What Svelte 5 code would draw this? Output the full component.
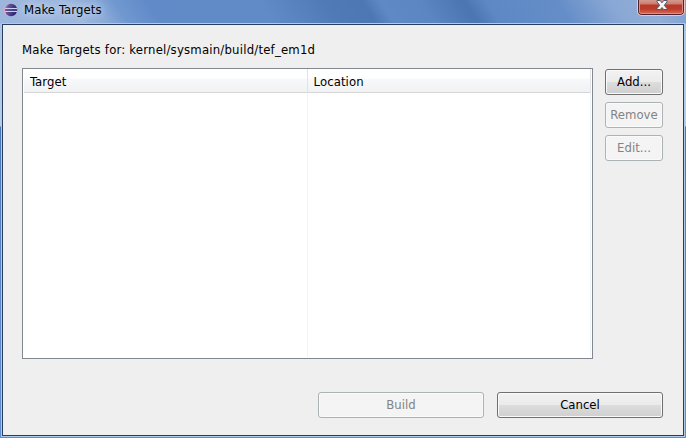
<script>
  const columns = ['Target', 'Location'];
  const actions = [
    { label: 'Add...', enabled: true },
    { label: 'Remove', enabled: false },
    { label: 'Edit...', enabled: false }
  ];
</script>

<div class="window">
  <header>
    <svg class="logo" width="16" height="14" viewBox="0 0 16 14">
      <defs>
        <linearGradient id="orb" x1="0" y1="0" x2="1" y2="0.3">
          <stop offset="0" stop-color="#b59bc5" />
          <stop offset="0.35" stop-color="#64549c" />
          <stop offset="1" stop-color="#28246c" />
        </linearGradient>
      </defs>
      <circle cx="6.2" cy="7" r="6" fill="#dba6c1" />
      <circle cx="8" cy="7" r="6.2" fill="url(#orb)" />
      <path d="M2 5.500H14M2 8.500H14" stroke="#c9d0ee" stroke-width="1" />
      <path d="M2 7H14" stroke="#51539a" stroke-width="1" />
    </svg>
    <span class="title">Make Targets</span>
    <button class="close" aria-label="Close">
      <svg width="12" height="11" viewBox="0 0 12 11">
        <path d="M1 .5H4.300L6 2.800 7.700 .5H11V1.800L8.300 5.300 11 8.500V9.500H7.700L6 7.500 4.300 9.500H1V8.500L3.700 5.300 1 1.800Z" fill="#f6f6f6" stroke="#535866" />
      </svg>
    </button>
  </header>
  <main>
    <p>Make Targets for: kernel/sysmain/build/tef_em1d</p>
    <div class="body">
      <div class="table">
        {#each columns as column}
          <div class="column"><div class="head">{column}</div></div>
        {/each}
      </div>
      <div class="actions">
        {#each actions as action}
          <button class="btn" disabled={!action.enabled}>{action.label}</button>
        {/each}
      </div>
    </div>
    <footer>
      <button class="btn" disabled>Build</button>
      <button class="btn">Cancel</button>
    </footer>
  </main>
</div>

<style>
  :global(body) {
    margin: 0;
    overflow: hidden;
  }
  .window {
    box-sizing: border-box;
    width: 686px;
    height: 438px;
    padding: 0 1px 1px;
    display: flex;
    flex-direction: column;
    font: 13px 'DejaVu Sans Condensed', 'DejaVu Sans', sans-serif;
    font-stretch: condensed;
    color: #000;
    background:
      linear-gradient(57deg, #9db6dd 0, #9bb5dd 70px, #88a8d7 92px, #7098d0 108px, #618bc8 135px, #608bc7 230px, #4f7ab6 285px, #4c77b2 316px, #5f89c5 331px, #5b86c1 365px, #4c77b2 396px, #4b76b1 402px, #5d88c4 420px, #658ec8 480px, #8aa8d5 525px, #91add8 555px, #7e9fcf 588px) 0 0 / 686px 24px no-repeat,
      linear-gradient(#a9c1e3 0, #b8cdea 126px, #4777b7 127px, #5d8ac7 300px, #608dcc 100%);
  }
  header {
    height: 23px;
    flex: none;
    display: flex;
    align-items: flex-start;
  }
  .logo {
    margin: 3px 0 0 2px;
  }
  .title {
    margin-left: 5px;
    line-height: 19px;
    text-shadow: 0 0 7px #dce6f5, 0 0 12px #cedcf0;
    letter-spacing: 0.09px;
  }
  .close {
    box-sizing: border-box;
    width: 48px;
    height: 16px;
    margin: 0 0 0 auto;
    padding: 0;
    border: 1px solid #e8c6cc;
    border-top: 0;
    border-radius: 0 0 5px 5px;
    box-shadow: inset 0 -1px #54202a, inset 1px 0 #54202a, inset -1px 0 #54202a, inset 2px 0 #d88f85, inset -2px 0 #d88f85, inset 0 -2px #d88f85;
    background: linear-gradient(#d59a91 0, #cb7c71 4px, #b8392a 5px, #bd3b27 9px, #d87965 100%);
    display: flex;
    justify-content: center;
    align-items: flex-start;
  }
  .close svg {
    margin: 0 0 0 2px;
  }
  main {
    box-sizing: border-box;
    flex: 1;
    border: 1px solid #283e60;
    box-shadow: 0 0 0 1px #aecbed;
    margin: 1px 1px 1px;
    padding: 0 19px 17px;
    background: #efefef;
    display: flex;
    flex-direction: column;
  }
  p {
    margin: 16px 0 10px;
    line-height: 17px;
    letter-spacing: 0.2px;
    white-space: nowrap;
  }
  .body {
    display: flex;
    gap: 12px;
    height: 291px;
  }
  .table {
    box-sizing: border-box;
    width: 571px;
    border: 1px solid #828790;
    background: #fff;
    display: flex;
    padding: 0 1px 1px;
  }
  .column {
    box-sizing: border-box;
    width: 284px;
    border-right: 1px solid #edf4fb;
  }
  .head {
    box-sizing: border-box;
    height: 24px;
    padding-left: 6px;
    line-height: 25px;
    letter-spacing: 0.1px;
    border-bottom: 1px solid #d5d5d5;
    box-shadow: 1px 0 #e0e3e7;
    background: linear-gradient(#fff 0, #fff 9px, #f7f8fa 10px, #f1f2f4 100%);
  }
  .actions {
    display: flex;
    flex-direction: column;
    gap: 7px;
    padding-top: 1px;
  }
  .btn {
    box-sizing: border-box;
    width: 58px;
    height: 26px;
    padding: 0 0 1px;
    border: 1px solid #707070;
    border-radius: 3px;
    box-shadow: inset 0 0 0 1px #fafafa;
    background: linear-gradient(#f2f2f2 0, #ebebeb 48%, #dddddd 50%, #cfcfcf 100%);
    font: inherit;
    color: #000;
    white-space: nowrap;
  }
  .btn:disabled {
    border-color: #adb2b5;
    background: #f4f4f4;
    color: #838383;
  }
  footer {
    margin-top: 33px;
    padding-right: 1px;
    display: flex;
    justify-content: flex-end;
    gap: 13px;
  }
  footer .btn {
    width: 166px;
  }
</style>
